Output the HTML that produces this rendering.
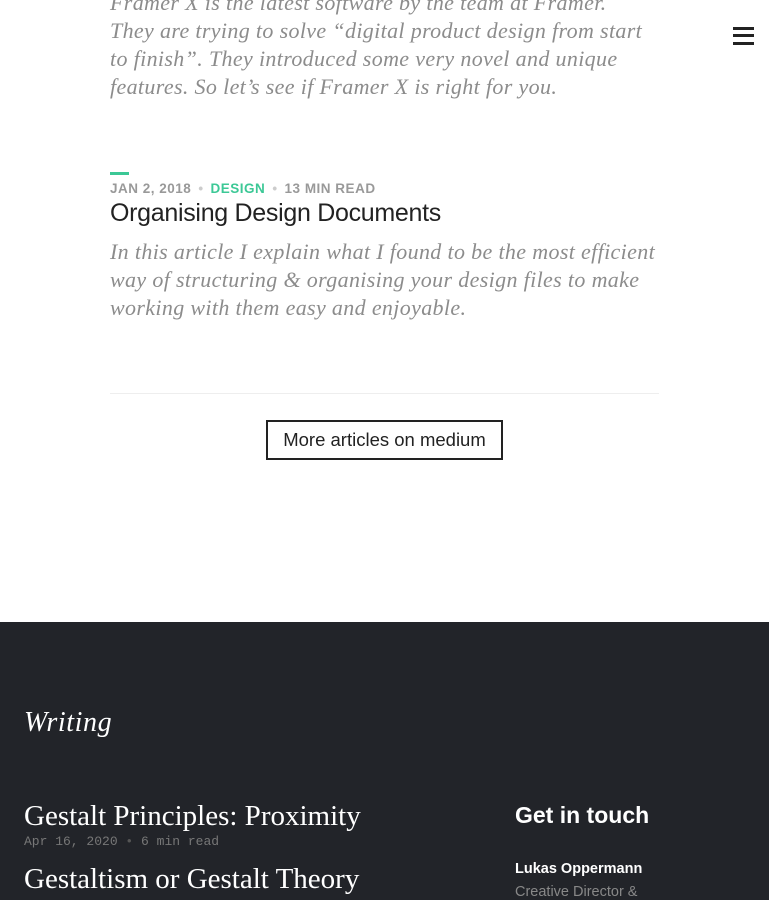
<!DOCTYPE html>
<html><head><meta charset="utf-8"><style>
*{margin:0;padding:0;box-sizing:border-box}
html,body{width:769px;height:900px;overflow:hidden;background:#fff}
body{position:relative;font-family:"Liberation Sans",sans-serif}
.abs{position:absolute;white-space:nowrap}
.ex{font-family:"Liberation Serif",serif;font-style:italic;font-size:22px;letter-spacing:.35px;color:#8c8c8c;line-height:28px;left:110px}
.burger{position:absolute;left:733px;width:21px;height:3px;background:#222}
.meta{left:110px;top:181px;font-size:13.5px;font-weight:bold;color:#999;letter-spacing:.5px}
.meta .g{color:#3cc896}
.meta .d{color:#ccc;margin:0 7px}
footer{position:absolute;left:0;top:622px;width:769px;height:278px;background:#222429}
.fs{font-family:'Liberation Serif',serif;color:#fff}
</style></head><body>
<div class="abs ex" style="top:-11px">Framer X is the latest software by the team at Framer.<br>They are trying to solve “digital product design from start<br>to finish”. They introduced some very novel and unique<br>features. So let’s see if Framer X is right for you.</div>
<div class="burger" style="top:27px"></div><div class="burger" style="top:34px"></div><div class="burger" style="top:42px"></div>
<div class="abs" style="left:110px;top:172px;width:19px;height:3px;background:#3cc896"></div>
<div class="abs meta">JAN 2, 2018<span class="d">•</span><span class="g">DESIGN</span><span class="d">•</span>13 MIN READ</div>
<div class="abs" style="left:110px;top:199px;font-size:25px;color:#222;letter-spacing:-.3px">Organising Design Documents</div>
<div class="abs ex" style="top:238px">In this article I explain what I found to be the most efficient<br>way of structuring &amp; organising your design files to make<br>working with them easy and enjoyable.</div>
<div class="abs" style="left:110px;top:393px;width:549px;height:1px;background:#eee"></div>
<div class="abs" style="left:266px;top:420px;width:237px;height:40px;border:2px solid #222;font-size:18.5px;color:#222;text-align:center;line-height:36px">More articles on medium</div>
<footer>
<div class="abs fs" style="left:24px;top:85px;font-style:italic;font-size:28px;letter-spacing:.6px">Writing</div>
<div class="abs fs" style="left:24px;top:178px;font-size:29px">Gestalt Principles: Proximity</div>
<div class="abs" style="left:24px;top:212px;font-family:'Liberation Mono',monospace;font-size:13px;color:#777">Apr 16, 2020 <span style="color:#555">•</span> 6 min read</div>
<div class="abs fs" style="left:24px;top:241px;font-size:29px">Gestaltism or Gestalt Theory</div>
<div class="abs" style="left:515px;top:180px;font-size:23px;font-weight:bold;color:#fff">Get in touch</div>
<div class="abs" style="left:515px;top:239px;font-size:14.5px;font-weight:bold;color:#fff">Lukas Oppermann</div>
<div class="abs" style="left:515px;top:262px;font-size:14.5px;color:#888">Creative Director &amp;</div>
</footer>
</body></html>
